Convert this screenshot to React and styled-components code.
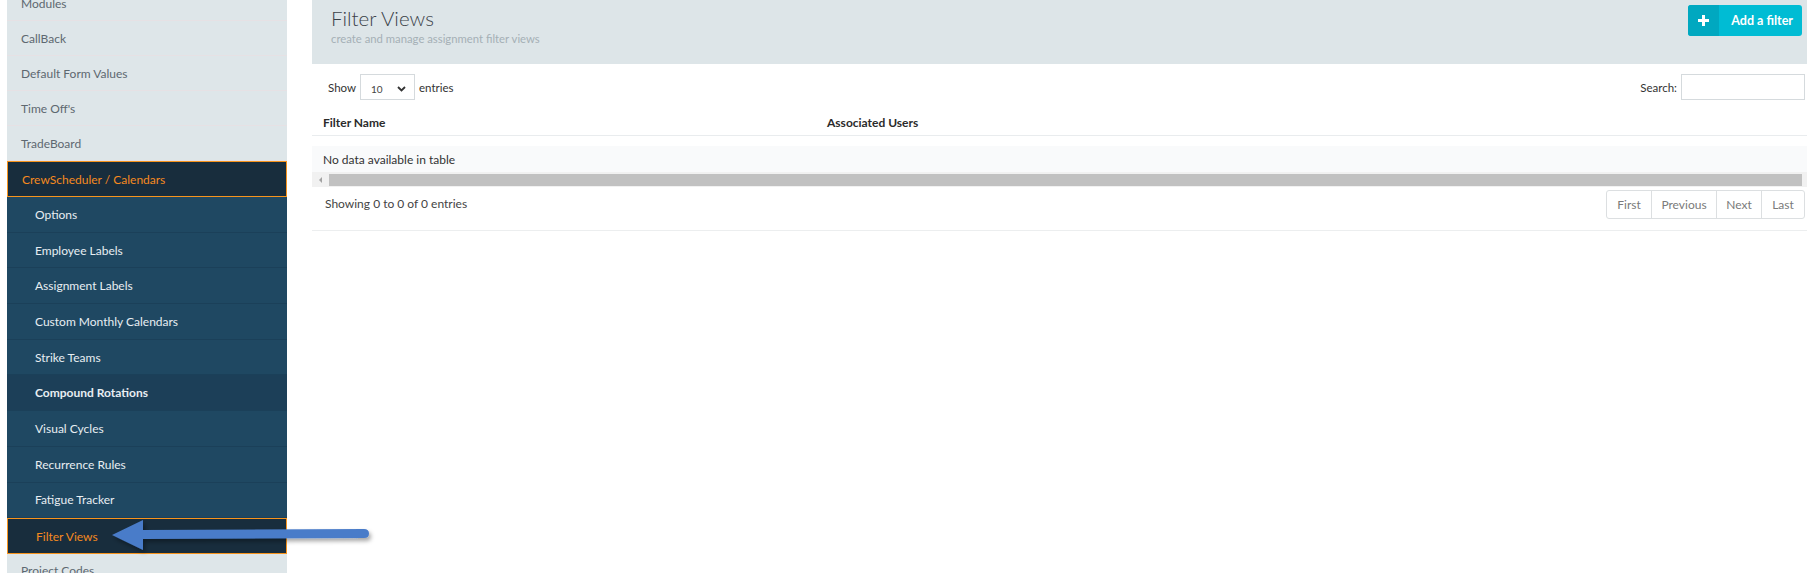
import React from 'react';
import styled, { createGlobalStyle } from 'styled-components';

const GlobalStyle = createGlobalStyle`
  html, body {
    margin: 0;
    padding: 0;
    background: #ffffff;
    font-family: Lato, "Open Sans", sans-serif;
  }
  * { box-sizing: border-box; }
`

const Page = styled.div`
  position: relative;
  display: flex;
  height: 573px;
  overflow: hidden;
  padding-left: 7px;
  gap: 25px;
`

const Sidebar = styled.nav`
  width: 280px;
  flex: none;
  background: #dee6e9;
  display: flex;
  flex-direction: column;
  margin-top: -14px;
`

const MenuItem = styled.div`
  height: 35px;
  flex: none;
  display: flex;
  align-items: center;
  padding-left: 14px;
  font-size: 12px;
  color: #5d6870;
  border-bottom: 1px solid #e6e1e4;
`

const ActiveParent = styled(MenuItem)`
  height: 36px;
  background: #182d3d;
  color: #f58a1f;
  border: 1px solid #f7941d;
`

const SubItem = styled.div`
  height: 35.7px;
  flex: none;
  display: flex;
  align-items: center;
  padding-left: 28px;
  font-size: 12px;
  color: ${({ $active }) => ($active ? '#f58a1f' : '#e8eef2')};
  font-weight: ${({ $bold }) => ($bold ? 700 : 400)};
  background: ${({ $active, $hover }) =>
    $active ? '#182d3d' : $hover ? '#1c3f58' : '#1f4862'};
  border: ${({ $active }) => ($active ? '1px solid #f7941d' : 'none')};
  border-bottom: ${({ $active }) => ($active ? '1px solid #f7941d' : '1px solid #1b4059')};
`

const Main = styled.main`
  flex: 1;
  display: flex;
  flex-direction: column;
`

const Header = styled.header`
  height: 64px;
  background: #dde5e8;
  display: flex;
  justify-content: space-between;
  align-items: flex-start;
  padding: 5px 5px 0 19px;
`

const TitleBlock = styled.div`
  padding-top: 1px;
`

const Title = styled.h1`
  margin: 0;
  font-size: 20.5px;
  font-weight: 300;
  color: #3b4248;
  line-height: 25px;
`

const Subtitle = styled.div`
  font-size: 11.3px;
  color: #a5b0b6;
  margin-top: 1px;
`

const AddButton = styled.button`
  display: flex;
  height: 31px;
  padding: 0;
  border: none;
  border-radius: 3px;
  overflow: hidden;
  background: #00bcd4;
  color: #ffffff;
  font-family: inherit;
  font-size: 12.5px;
  font-weight: 700;
  cursor: pointer;
`

const ButtonIcon = styled.span`
  width: 31px;
  display: flex;
  align-items: center;
  justify-content: center;
  background: #00a8c0;
`

const ButtonLabel = styled.span`
  display: flex;
  align-items: center;
  padding: 0 9px 0 12px;
`

const Controls = styled.div`
  display: flex;
  justify-content: space-between;
  align-items: center;
  padding: 10px 2px 0 16px;
  height: 36px;
  font-size: 11.5px;
  color: #333;
`

const Label = styled.label`
  display: flex;
  align-items: center;
  gap: 4px;
`

const Select = styled.div`
  width: 55px;
  height: 26px;
  border: 1px solid #d5dadd;
  display: flex;
  align-items: center;
  justify-content: space-between;
  padding: 3px 8px 0 10px;
  font-size: 10px;
  color: #444;
`

const SearchInput = styled.input`
  width: 124px;
  height: 26px;
  border: 1px solid #d5dadd;
  outline: none;
`

const Table = styled.div`
  display: flex;
  flex-direction: column;
`

const HeadRow = styled.div`
  display: grid;
  grid-template-columns: 504px 1fr;
  height: 36px;
  align-items: end;
  padding-bottom: 5px;
  border-bottom: 1px solid #e9ecee;
  font-size: 12px;
  font-weight: 700;
  color: #2b2b2b;
`

const HeadCell = styled.div`
  padding-left: 11px;
`

const EmptyRow = styled.div`
  margin-top: 10px;
  height: 26px;
  background: #f9fafb;
  display: flex;
  align-items: center;
  padding-left: 11px;
  font-size: 12px;
  color: #333;
`

const ScrollTrack = styled.div`
  height: 15px;
  background: #f1f1f1;
  display: flex;
  align-items: center;
  padding: 0 5px 0 7px;
  gap: 7px;
`

const ScrollArrow = styled.span`
  width: 0;
  height: 0;
  border-top: 3px solid transparent;
  border-bottom: 3px solid transparent;
  border-right: 3px solid #a3a3a3;
`

const ScrollThumb = styled.div`
  flex: 1;
  height: 12px;
  background: #c1c1c1;
`

const Footer = styled.div`
  display: flex;
  justify-content: space-between;
  align-items: flex-start;
  padding: 3px 2px 11px 13px;
  border-bottom: 1px solid #eceeef;
  font-size: 12px;
  color: #444;
`

const Info = styled.div`
  padding-top: 6px;
`

const Pager = styled.div`
  display: flex;
  border: 1px solid #dcdfe1;
  border-radius: 3px;
  height: 29px;
`

const PageButton = styled.span`
  width: ${({ $w }) => $w}px;
  display: flex;
  align-items: center;
  justify-content: center;
  font-size: 12px;
  color: #7a7a7a;
  border-left: ${({ $first }) => ($first ? 'none' : '1px solid #dcdfe1')};
`

const Pointer = styled.svg`
  position: absolute;
  left: 105px;
  top: 512px;
  overflow: visible;
`

const mainItems = ['Modules', 'CallBack', 'Default Form Values', "Time Off's", 'TradeBoard'];
const subItems = [
  'Options',
  'Employee Labels',
  'Assignment Labels',
  'Custom Monthly Calendars',
  'Strike Teams',
  'Compound Rotations',
  'Visual Cycles',
  'Recurrence Rules',
  'Fatigue Tracker',
  'Filter Views',
];

export default function App() {
  return (
    <>
      <GlobalStyle />
      <Page>
        <Sidebar>
          {mainItems.map((m) => (
            <MenuItem key={m}>{m}</MenuItem>
          ))}
          <ActiveParent>CrewScheduler / Calendars</ActiveParent>
          {subItems.map((s) => (
            <SubItem
              key={s}
              $active={s === 'Filter Views'}
              $hover={s === 'Compound Rotations'}
              $bold={s === 'Compound Rotations'}
            >
              {s}
            </SubItem>
          ))}
          <MenuItem>Project Codes</MenuItem>
        </Sidebar>

        <Main>
          <Header>
            <TitleBlock>
              <Title>Filter Views</Title>
              <Subtitle>create and manage assignment filter views</Subtitle>
            </TitleBlock>
            <AddButton>
              <ButtonIcon>
                <svg width="11" height="11" viewBox="0 0 11 11">
                  <path d="M4 0h3v4h4v3H7v4H4V7H0V4h4z" fill="#fff" />
                </svg>
              </ButtonIcon>
              <ButtonLabel>Add a filter</ButtonLabel>
            </AddButton>
          </Header>

          <Controls>
            <Label>
              Show
              <Select>
                <span>10</span>
                <svg width="9" height="6" viewBox="0 0 9 6">
                  <path d="M1 1l3.5 3.5L8 1" stroke="#333" strokeWidth="1.8" fill="none" />
                </svg>
              </Select>
              entries
            </Label>
            <Label>
              Search:
              <SearchInput />
            </Label>
          </Controls>

          <Table>
            <HeadRow>
              <HeadCell>Filter Name</HeadCell>
              <HeadCell>Associated Users</HeadCell>
            </HeadRow>
            <EmptyRow>No data available in table</EmptyRow>
            <ScrollTrack>
              <ScrollArrow />
              <ScrollThumb />
            </ScrollTrack>
          </Table>

          <Footer>
            <Info>Showing 0 to 0 of 0 entries</Info>
            <Pager>
              <PageButton $w={44} $first>First</PageButton>
              <PageButton $w={65}>Previous</PageButton>
              <PageButton $w={45}>Next</PageButton>
              <PageButton $w={43}>Last</PageButton>
            </Pager>
          </Footer>
        </Main>

        <Pointer width="265" height="42" viewBox="0 0 265 42">
          <defs>
            <filter id="sh" x="-10%" y="-30%" width="120%" height="180%">
              <feDropShadow dx="2" dy="3" stdDeviation="2" floodColor="#000" floodOpacity="0.35" />
            </filter>
          </defs>
          <path
            d="M7 23 L38 8 L38 18 L259 17 Q264 17 264 21.5 Q264 26 259 26 L38 27 L38 38 Z"
            fill="#4a7cc9"
            filter="url(#sh)"
          />
        </Pointer>
      </Page>
    </>
  );
}
